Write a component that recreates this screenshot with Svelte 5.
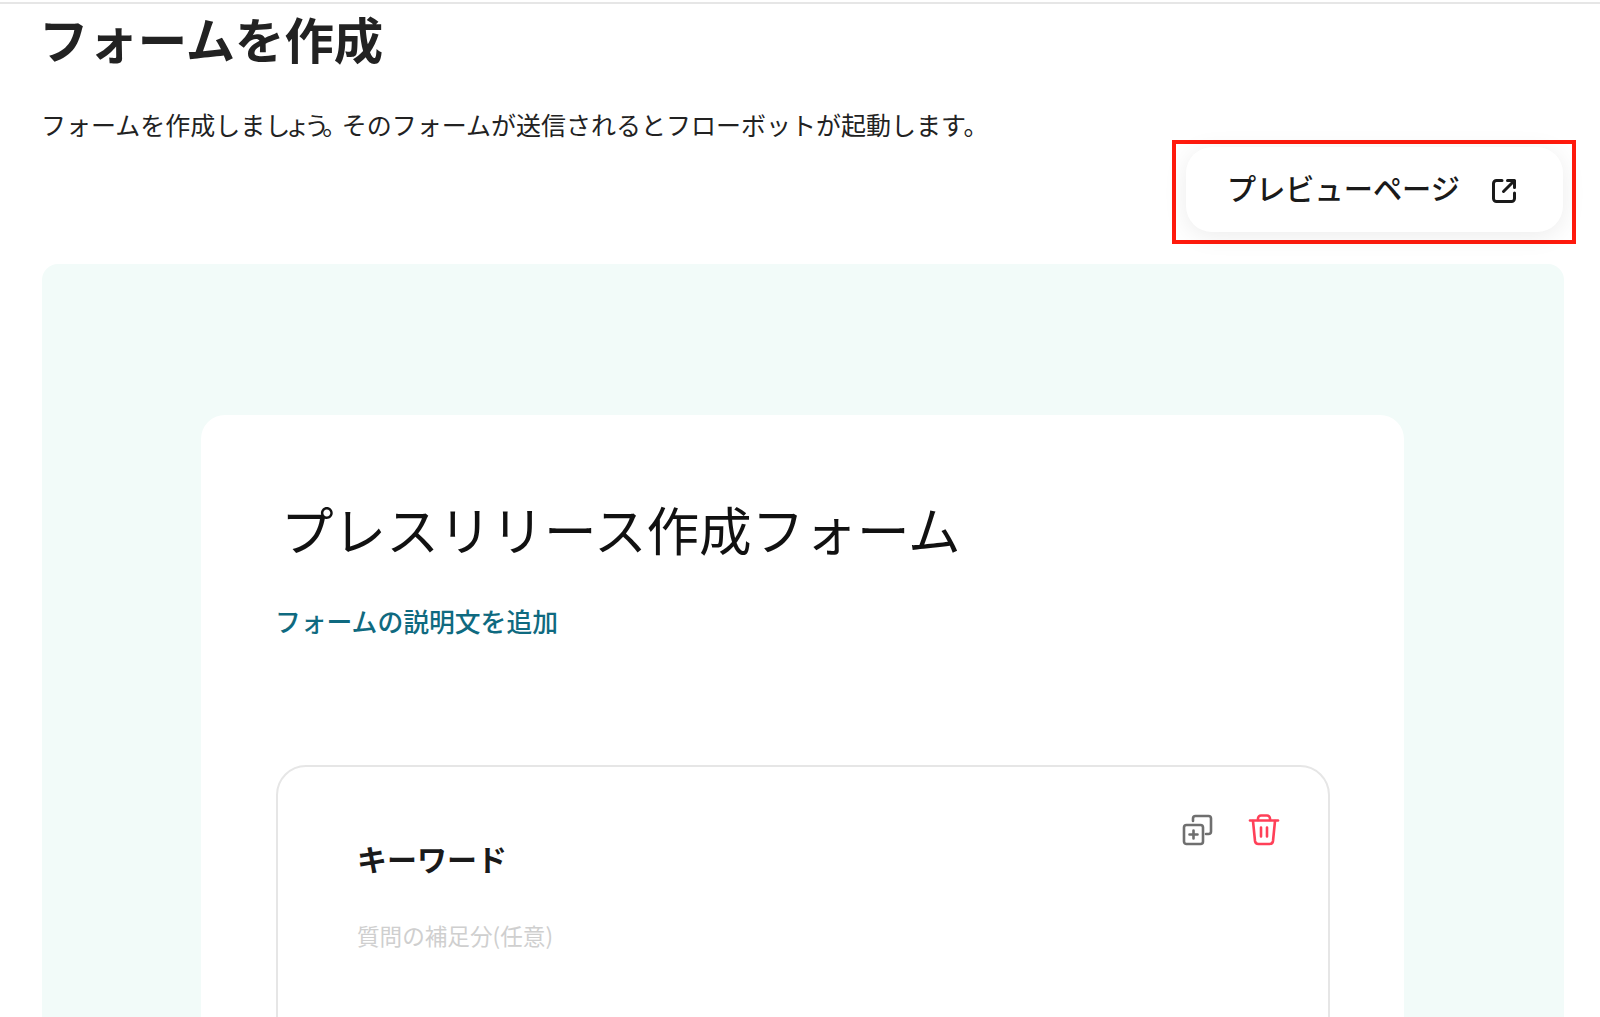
<script lang="ts">
    const title = "フォームを作成";
</script>

<div class="topline"></div>
<div class="page">
    <header class="head">
        <h1>{title}</h1>
        <p class="lead">フォームを作成しま<span class="tight">しょう。</span>そのフォームが送信されるとフローボットが起動します。</p>
    </header>

    <div class="actions">
        <div class="highlight">
            <button class="preview">
                <span>プレビューページ</span>
                <svg width="28" height="28" viewBox="0 0 28 28" fill="none" stroke="#1a1a1a" stroke-width="3" stroke-linecap="round" stroke-linejoin="round">
                    <path d="M12 3.500H6.500a3 3 0 0 0-3 3v15a3 3 0 0 0 3 3h15a3 3 0 0 0 3-3V16" />
                    <path d="M17.500 3.500h7v7" />
                    <path d="M24 4L13.500 14.500" />
                </svg>
            </button>
        </div>
    </div>

    <section class="panel">
        <div class="card">
            <h2>プレスリリース作成フォーム</h2>
            <a class="add-desc" href="#top">フォームの説明文を追加</a>

            <div class="question">
                <div class="tools">
                    <svg width="32" height="32" viewBox="0 0 32 32" fill="none" stroke="#6f6f6f" stroke-width="2.600" stroke-linecap="round" stroke-linejoin="round">
                        <path d="M11 7V4.500A2.500 2.500 0 0 1 13.500 2h13A2.500 2.500 0 0 1 29 4.500v13a2.500 2.500 0 0 1-2.500 2.500H24" />
                        <rect x="2" y="11" width="19" height="19" rx="2.500" />
                        <path d="M11.500 16.500v8M7.500 20.500h8" />
                    </svg>
                    <svg width="32" height="32" viewBox="0 0 32 32" fill="none" stroke="#ff4058" stroke-width="2.600" stroke-linecap="round" stroke-linejoin="round">
                        <path d="M2 6.500h28" />
                        <path d="M10 6V4.500A3 3 0 0 1 13 1.500h6a3 3 0 0 1 3 3V6" />
                        <path d="M5 7l2 20a3.500 3.500 0 0 0 3.500 3h11a3.500 3.500 0 0 0 3.500-3l2-20" />
                        <path d="M13 13.500v9M19 13.500v9" />
                    </svg>
                </div>
                <div class="q-label">キーワード</div>
                <div class="q-hint">質問の補足分(任意)</div>
            </div>
        </div>
    </section>
</div>

<style>
    :global(body) {
        margin: 0;
        background: #fff;
        overflow: hidden;
    }
    .topline {
        height: 2px;
        margin-top: 2px;
        background: #e6e6e6;
    }
    .page {
        box-sizing: border-box;
        padding: 0 36px 0 42px;
        font-family: "Noto Sans CJK JP", "Noto Sans", sans-serif;
        color: #222;
    }
    .head {
        margin-left: -3px;
    }
    h1 {
        margin: 0;
        font-size: 49.400px;
        line-height: 68px;
        font-weight: 700;
    }
    .lead {
        margin: 36px 0 0 2px;
        font-size: 25px;
        line-height: 32px;
        white-space: nowrap;
    }
    .tight {
        letter-spacing: -5.500px;
    }
    .actions {
        display: flex;
        justify-content: flex-end;
        margin-right: -12px;
    }
    .highlight {
        border: 4px solid #ff1a0d;
        padding: 3px 9px 8px 10px;
    }
    .preview {
        display: flex;
        align-items: center;
        gap: 30px;
        width: 377px;
        height: 85px;
        box-sizing: border-box;
        padding: 0 44px 5px 41px;
        border: 0;
        border-radius: 26px;
        background: #fff;
        box-shadow: 0 4px 24px rgba(0, 0, 0, 0.08);
        font: inherit;
        font-size: 29.200px;
        font-weight: 500;
        color: #1a1a1a;
        white-space: nowrap;
    }
    .preview svg {
        flex: none;
        margin-top: 8px;
    }
    .panel {
        margin-top: 20px;
        padding: 151px 160px 0 159px;
        height: 753px;
        overflow: hidden;
        box-sizing: border-box;
        background: #f2fbf9;
        border-radius: 16px 16px 0 0;
    }
    .card {
        height: 700px;
        box-sizing: border-box;
        padding: 73px 74px 0 75px;
        background: #fff;
        border-radius: 24px;
    }
    h2 {
        margin: 0 0 0 5px;
        font-size: 52.600px;
        line-height: 80px;
        font-weight: 400;
        color: #111;
        white-space: nowrap;
    }
    .add-desc {
        display: block;
        margin: 33px 0 0 -1px;
        font-size: 25.800px;
        line-height: 40px;
        font-weight: 500;
        color: #0f6a80;
        text-decoration: none;
    }
    .question {
        position: relative;
        margin-top: 124px;
        height: 400px;
        box-sizing: border-box;
        padding: 69px 80px 0 79px;
        border: 2px solid #e6e6e6;
        border-radius: 30px;
    }
    .tools {
        position: absolute;
        top: 47px;
        right: 48px;
        display: flex;
        gap: 34px;
    }
    .q-label {
        font-size: 30px;
        line-height: 44px;
        font-weight: 700;
        color: #1a1a1a;
    }
    .q-hint {
        margin-top: 40px;
        font-size: 22.600px;
        line-height: 32px;
        color: #cfcfcf;
    }
</style>
